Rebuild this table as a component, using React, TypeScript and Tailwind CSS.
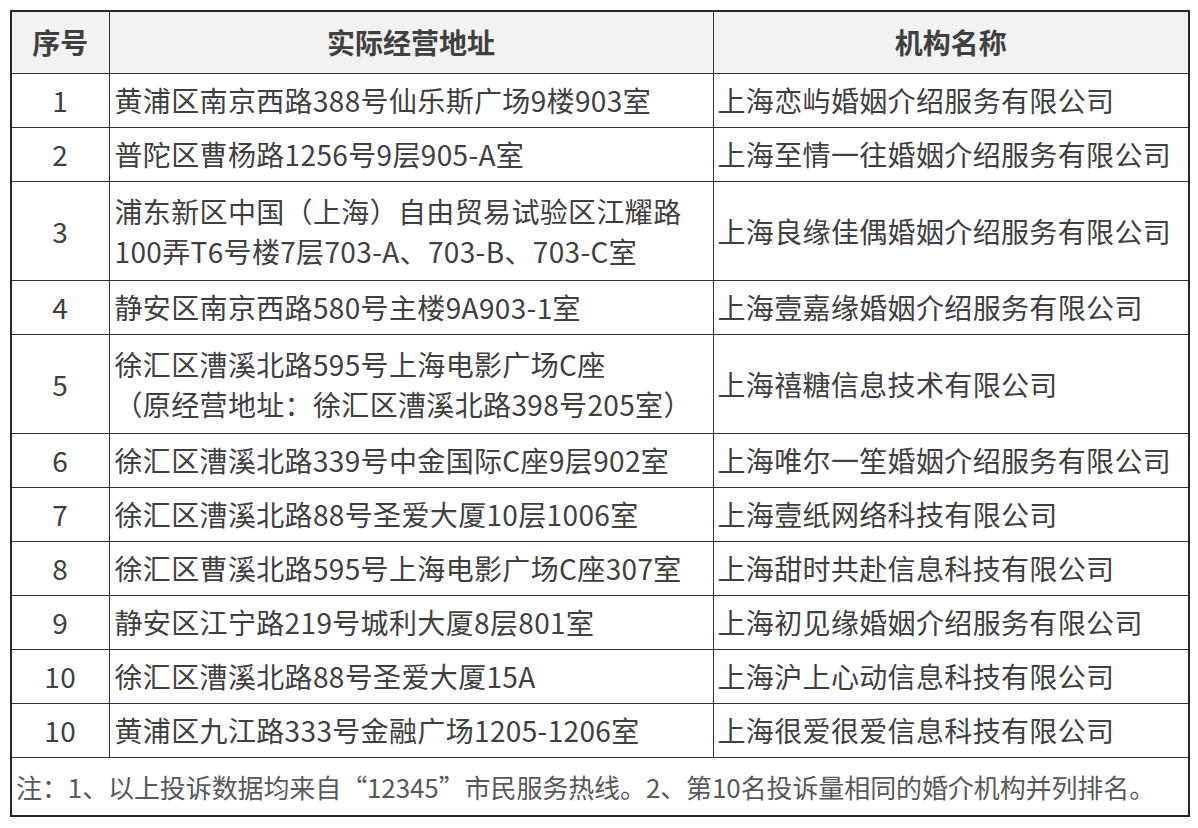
const rows: { no: string; addr: string[]; name: string }[] = [
  { no: '1', addr: ['黄浦区南京西路388号仙乐斯广场9楼903室'], name: '上海恋屿婚姻介绍服务有限公司' },
  { no: '2', addr: ['普陀区曹杨路1256号9层905-A室'], name: '上海至情一往婚姻介绍服务有限公司' },
  {
    no: '3',
    addr: ['浦东新区中国（上海）自由贸易试验区江耀路', '100弄T6号楼7层703-A、703-B、703-C室'],
    name: '上海良缘佳偶婚姻介绍服务有限公司',
  },
  { no: '4', addr: ['静安区南京西路580号主楼9A903-1室'], name: '上海壹嘉缘婚姻介绍服务有限公司' },
  {
    no: '5',
    addr: ['徐汇区漕溪北路595号上海电影广场C座', '（原经营地址：徐汇区漕溪北路398号205室）'],
    name: '上海禧糖信息技术有限公司',
  },
  { no: '6', addr: ['徐汇区漕溪北路339号中金国际C座9层902室'], name: '上海唯尔一笙婚姻介绍服务有限公司' },
  { no: '7', addr: ['徐汇区漕溪北路88号圣爱大厦10层1006室'], name: '上海壹纸网络科技有限公司' },
  { no: '8', addr: ['徐汇区曹溪北路595号上海电影广场C座307室'], name: '上海甜时共赴信息科技有限公司' },
  { no: '9', addr: ['静安区江宁路219号城利大厦8层801室'], name: '上海初见缘婚姻介绍服务有限公司' },
  { no: '10', addr: ['徐汇区漕溪北路88号圣爱大厦15A'], name: '上海沪上心动信息科技有限公司' },
  { no: '10', addr: ['黄浦区九江路333号金融广场1205-1206室'], name: '上海很爱很爱信息科技有限公司' },
]

export default function App() {
  return (
    <div
      className="w-[1198px] h-[828px] bg-white pt-[10px] pl-[10px] text-[#404040]"
      style={{ fontFamily: '"Microsoft YaHei", "Noto Sans CJK SC", "Noto Sans", sans-serif' }}
    >
      <table className="w-[1178px] border-collapse border-2 border-[#262626] table-fixed">
        <colgroup>
          <col className="w-[98px]" />
          <col className="w-[604px]" />
          <col className="w-[476px]" />
        </colgroup>
        <thead>
          <tr className="h-[62px] bg-[#f2f2f2] text-[28px] font-bold">
            <th className="border border-[#333] text-center">序号</th>
            <th className="border border-[#333] text-center">实际经营地址</th>
            <th className="border border-[#333] text-center">机构名称</th>
          </tr>
        </thead>
        <tbody className="text-[28px] tracking-[0.35px]">
          {rows.map((r, i) => (
            <tr key={i} className={r.addr.length > 1 ? 'h-[99px]' : 'h-[54px]'}>
              <td className="border border-[#333] text-center leading-[40px]">{r.no}</td>
              <td className="border border-[#333] pl-[5px] leading-[40px] whitespace-nowrap">
                {r.addr.map((a, j) => (
                  <div key={j}>{a}</div>
                ))}
              </td>
              <td className="border border-[#333] pl-[4px] leading-[40px] whitespace-nowrap">{r.name}</td>
            </tr>
          ))}
          <tr className="h-[59px]">
            <td
              colSpan={3}
              className="border border-[#333] pl-[4px] text-[26px] tracking-[-0.1px] text-[#595959] whitespace-nowrap"
            >
              注：1、以上投诉数据均来自“12345”市民服务热线。2、第10名投诉量相同的婚介机构并列排名。
            </td>
          </tr>
        </tbody>
      </table>
    </div>
  )
}
